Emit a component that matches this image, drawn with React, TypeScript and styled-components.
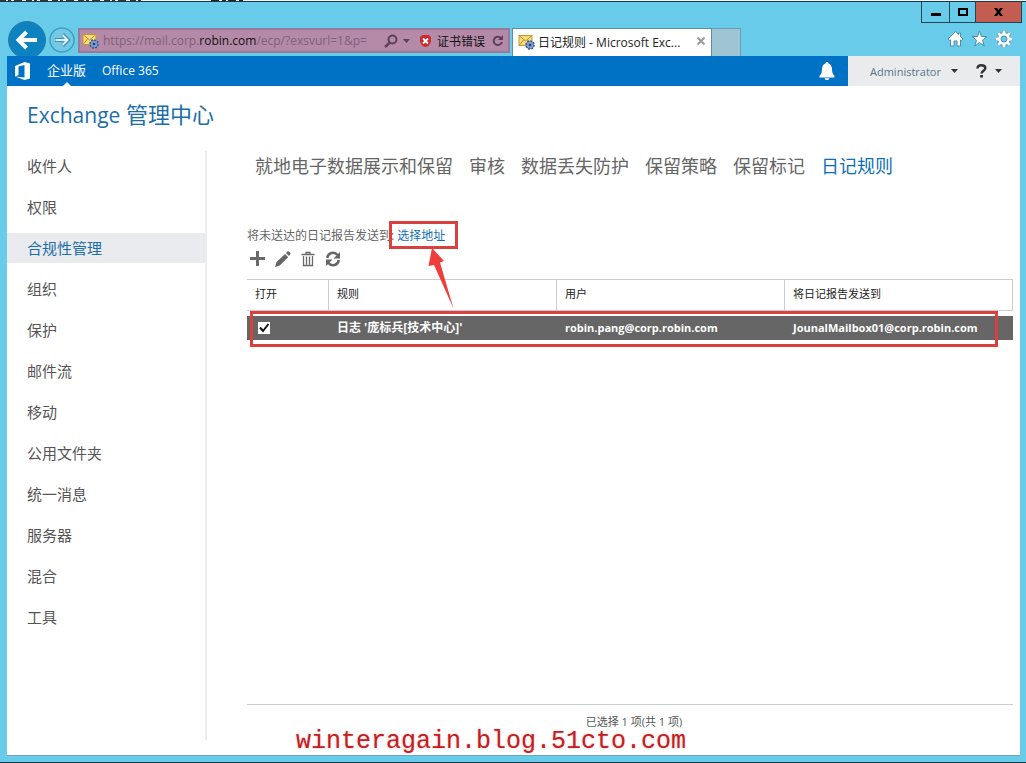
import React from "react";
import styled, { createGlobalStyle, css } from "styled-components";

const ui = `"Open Sans", "Noto Sans CJK SC", sans-serif`;

const GlobalStyle = createGlobalStyle`
  *, *::before, *::after { box-sizing: border-box; }
  body { margin: 0; background: #67cbe9; font-family: ${ui}; color: #333; }
  button, input { font: inherit; color: inherit; margin: 0; }
  button { border: 0; background: none; padding: 0; cursor: pointer; }
  a { color: inherit; text-decoration: none; }
  ul { list-style: none; margin: 0; padding: 0; }
`;

const Frame = styled.div`
  display: flex;
  flex-direction: column;
  min-height: 100vh;
  background: #67cbe9;
  border-bottom: 1px solid #17394a;
`;

const Edge = styled.svg`
  display: block;
  width: 100%;
  height: 2px;
  flex: none;
`;

const TitleBar = styled.header`
  display: flex;
  justify-content: flex-end;
  height: 21px;
  padding-right: 4px;
`;

const WindowButton = styled.button<{ $wide?: boolean; $close?: boolean }>`
  display: grid;
  place-items: center;
  width: ${(p) => (p.$close ? 46 : p.$wide ? 29 : 26)}px;
  height: 21px;
  border: solid #1d4556;
  border-width: 0 1px 1px ${(p) => (p.$wide ? 1 : 0)}px;
  background: ${(p) => (p.$close ? "#c35d52" : "transparent")};
`;

const NavBar = styled.div`
  display: flex;
  align-items: flex-start;
  height: 33px;
  padding: 0 13px 0 8px;
`;

const BackButton = styled.button`
  width: 38px;
  height: 35px;
  margin-top: -2px;
  overflow: hidden;
`;

const ForwardButton = styled.button`
  width: 26px;
  height: 26px;
  margin: 4px 3px 0;
`;

const AddressBar = styled.form`
  display: flex;
  align-items: center;
  width: 432px;
  height: 25px;
  margin: 5px 2px 0 0;
  padding: 0 4px 0 2px;
  border: 2px solid #967a97;
  background: #b58aa8;
  font-size: 12px;
  color: #111;
`;

const Url = styled.a`
  flex: 1;
  min-width: 0;
  margin-left: 4px;
  white-space: nowrap;
  color: #7f6279;
  b { font-weight: 400; color: #111; }
`;

const AddressButton = styled.button`
  display: flex;
  align-items: center;
  margin-left: 5px;
`;

const CertError = styled.button`
  display: flex;
  align-items: center;
  gap: 6px;
  margin: 0 2px 0 10px;
  font-size: 12px;
`;

const PageTab = styled.div`
  display: flex;
  align-items: center;
  width: 200px;
  height: 28px;
  margin-top: 5px;
  padding: 0 5px 2px;
  border: 1px solid #5a8fa3;
  border-bottom: 0;
  background: #fff;
  font-size: 12px;
  color: #222;
  span { flex: 1; margin-left: 3px; white-space: nowrap; }
`;

const NewTab = styled.button`
  width: 29px;
  height: 28px;
  margin-top: 5px;
  border: 1px solid #6b9caf;
  border-width: 1px 1px 0 0;
  background: #9fc4d3;
`;

const BrowserTools = styled.div`
  display: flex;
  gap: 7px;
  margin: 7px 0 0 auto;
`;

const Page = styled.div`
  display: flex;
  flex: 1;
  flex-direction: column;
  margin: 0 6px 6px 7px;
  border-bottom: 1px solid #6aa7bd;
  background: #fff;
`;

const SuiteBar = styled.nav`
  display: flex;
  height: 30px;
  background: #0072c6;
  color: #fff;
  font-size: 12px;
`;

const Logo = styled.a`
  display: grid;
  place-items: center;
  width: 32px;
`;

const SuiteLink = styled.a<{ $current?: boolean }>`
  position: relative;
  padding: 0 8px;
  line-height: 29px;
  font-size: ${(p) => (p.$current ? 13 : 12)}px;
  ${(p) =>
    p.$current &&
    css`
      &::after {
        content: "";
        position: absolute;
        left: 50%;
        bottom: 0;
        margin-left: -4px;
        border: 4px solid transparent;
        border-top: 0;
        border-bottom-color: #fff;
      }
    `}
`;

const BellButton = styled.button`
  display: grid;
  place-items: center;
  width: 42px;
  margin-left: auto;
`;

const Account = styled.div`
  display: flex;
  align-items: center;
  justify-content: space-between;
  width: 172px;
  padding: 0 18px 0 22px;
  background: #e9ebed;
  font-size: 11px;
`;

const MenuButton = styled.button<{ $gap: number }>`
  display: flex;
  align-items: center;
  gap: ${(p) => p.$gap}px;
  color: #55768a;
  svg { flex: none; }
`;

const Title = styled.h1`
  margin: 13px 20px 20px;
  font-size: 22px;
  line-height: 31px;
  font-weight: 400;
  color: #1c6ea8;
  span { font-size: 21px; }
`;

const Body = styled.div`
  display: flex;
  flex: 1;
`;

const Sidebar = styled.ul`
  display: flex;
  flex-direction: column;
  gap: 11px;
  width: 200px;
  margin-bottom: 15px;
  border-right: 2px solid #ececec;
`;

const SideLink = styled.a<{ $current?: boolean }>`
  display: block;
  height: 30px;
  padding-left: 20px;
  line-height: 30px;
  font-size: 15px;
  color: ${(p) => (p.$current ? "#1c6ea8" : "#555")};
  background: ${(p) => (p.$current ? "#e9ebee" : "transparent")};
`;

const Main = styled.main`
  display: flex;
  flex: 1;
  flex-direction: column;
  min-width: 0;
  padding: 0 7px 0 40px;
`;

const Tabs = styled.nav`
  display: flex;
  gap: 16px;
  height: 30px;
  padding-left: 8px;
  line-height: 30px;
  font-size: 18px;
`;

const Tab = styled.a<{ $current?: boolean }>`
  color: ${(p) => (p.$current ? "#0f6fb5" : "#666")};
  white-space: nowrap;
`;

const Undelivered = styled.p`
  display: flex;
  margin: 45px 0 0;
  line-height: 20px;
  font-size: 12px;
  color: #666;
`;

const Callout = styled.span`
  position: relative;
  z-index: 1;
  margin-left: 3px;
  a { color: #0f6fb5; }
  &::before {
    content: "";
    position: absolute;
    inset: -5px -13px -3px -8px;
    border: 3px solid #d9413f;
    pointer-events: none;
  }
`;

const Arrow = styled.svg`
  position: absolute;
  left: 30px;
  top: 22px;
  pointer-events: none;
`;

const Toolbar = styled.div`
  display: flex;
  gap: 9px;
  height: 33px;
  padding: 5px 0 0 3px;
`;

const ToolButton = styled.button`
  width: 16px;
  height: 16px;
  svg { display: block; }
`;

const Rules = styled.table`
  width: 100%;
  table-layout: fixed;
  border-collapse: separate;
  border-spacing: 0;
`;

const Col = styled.col<{ $width?: number }>`
  ${(p) => p.$width && `width: ${p.$width}px;`}
`;

const HeadCell = styled.th`
  height: 32px;
  padding: 0 8px 2px;
  border: 1px solid #ccc;
  border-left: 0;
  text-align: left;
  line-height: 16px;
  font-size: 11px;
  font-weight: 400;
  color: #222;
`;

const Gap = styled.tr`
  height: 5px;
  td { padding: 0; }
`;

const RuleRow = styled.tr`
  background: #666;
  color: #fff;
`;

const Cell = styled.td<{ $address?: boolean }>`
  height: 24px;
  padding: 0 8px;
  line-height: 20px;
  font-size: ${(p) => (p.$address ? 11 : 12)}px;
  font-weight: 700;
  white-space: nowrap;
`;

const CheckBox = styled.label`
  position: relative;
  display: block;
  width: 12px;
  margin-left: 3px;
  svg { position: absolute; left: 0; top: 0; pointer-events: none; }
`;

const Check = styled.input`
  appearance: none;
  display: block;
  width: 12px;
  height: 12px;
  background: #fff;
  & + svg { visibility: hidden; }
  &:checked + svg { visibility: visible; }
`;

const TableWrap = styled.div`
  position: relative;
`;

const RowMark = styled.div`
  position: absolute;
  inset: 32px 15px -7px 3px;
  border: 3px solid #d9413f;
  pointer-events: none;
`;

const Status = styled.footer`
  position: relative;
  height: 51px;
  margin-top: auto;
  padding: 9px 0 0 8px;
  border-top: 1px solid #c9cfd2;
  text-align: center;
  line-height: 16px;
  font-size: 11px;
  color: #555;
`;

const Watermark = styled.span`
  position: absolute;
  left: 49px;
  top: 25px;
  line-height: 24px;
  font-family: "Liberation Mono", monospace;
  font-size: 25px;
  color: #c3201f;
  text-shadow: 0 0 2px #f3b6b4;
  white-space: nowrap;
`;

const Caret = ({ color = "#333" }: { color?: string }) => (
  <svg width="7" height="4" viewBox="0 0 7 4"><path d="M0 0h7L3.500 4z" fill={color} /></svg>
);

const MailGear = () => (
  <svg width="17" height="16" viewBox="0 0 17 16">
    <rect x="1" y="1.500" width="13" height="10" fill="#f8dc7c" stroke="#c19a35" />
    <path d="M1.500 2l6 5 6-5M1.500 11l4-5M13.500 11l-4-5" fill="none" stroke="#b98f2e" />
    <circle cx="12" cy="11" r="4" fill="#5d7fb8" stroke="#34578f" strokeWidth="1.600" strokeDasharray="1.800 1.300" />
    <circle cx="12" cy="11" r="3.200" fill="#7f9dce" />
    <circle cx="12" cy="11" r="1.300" fill="#22406f" />
  </svg>
);

const gearTeeth = "M9 .8v16.400M.8 9h16.400M3.200 3.200l11.600 11.600M14.800 3.200L3.200 14.800";

const GearIcon = () => (
  <svg width="18" height="18" viewBox="0 0 18 18">
    <path d={gearTeeth} stroke="#4a8ea9" strokeWidth="4.200" />
    <circle cx="9" cy="9" r="6.600" fill="#4a8ea9" />
    <path d={gearTeeth} stroke="#fff" strokeWidth="2.800" />
    <circle cx="9" cy="9" r="5.900" fill="#fff" />
    <circle cx="9" cy="9" r="3" fill="#67cbe9" stroke="#4a8ea9" />
  </svg>
);

const sections = ["收件人", "权限", "合规性管理", "组织", "保护", "邮件流", "移动", "公用文件夹", "统一消息", "服务器", "混合", "工具"];
const tabs = ["就地电子数据展示和保留", "审核", "数据丢失防护", "保留策略", "保留标记", "日记规则"];

export default function App() {
  return (
    <Frame>
      <GlobalStyle />
      <Edge aria-hidden="true">
        <rect width="100%" height="1" fill="#eef4f6" />
        <path d="M0 .5h142" stroke="#333" strokeDasharray="6 2 3 3 8 4" />
        <path d="M211 .5h32" stroke="#222" strokeDasharray="8 3 4 2" />
        <rect y="1" width="100%" height="1" fill="#17394a" />
      </Edge>
      <TitleBar>
        <WindowButton $wide aria-label="最小化">
          <svg width="10" height="10"><path d="M0 6h10v3H0z" fill="#000" /></svg>
        </WindowButton>
        <WindowButton aria-label="最大化">
          <svg width="10" height="8"><path d="M1 1h8v6H1z" fill="none" stroke="#000" strokeWidth="2" /></svg>
        </WindowButton>
        <WindowButton $close aria-label="关闭">
          <svg width="9" height="8" viewBox="0 0 9 8"><path d="M0 0h3l1.500 2L6 0h3L6 4l3 4H6L4.500 6 3 8H0l3-4z" fill="#000" /></svg>
        </WindowButton>
      </TitleBar>
      <NavBar>
        <BackButton aria-label="后退">
          <svg width="38" height="38" viewBox="0 0 38 38">
            <circle cx="19" cy="19" r="18.500" fill="#0c83c0" stroke="#2c7ca3" />
            <path d="M29 19H11M18.500 11L10.500 19l8 8" fill="none" stroke="#fff" strokeWidth="4" />
          </svg>
        </BackButton>
        <ForwardButton aria-label="前进">
          <svg width="26" height="26" viewBox="0 0 26 26">
            <circle cx="13" cy="13" r="12" fill="#72c9e6" stroke="#3f9fc0" strokeWidth="1.500" />
            <path d="M6 13h12M13.500 7.500l5.500 5.500-5.500 5.500" fill="none" stroke="#438fae" strokeWidth="4" />
            <path d="M6.500 13h11M13.500 8l5 5-5 5" fill="none" stroke="#d8f2fa" strokeWidth="2" />
          </svg>
        </ForwardButton>
        <AddressBar onSubmit={(e) => e.preventDefault()}>
          <MailGear />
          <Url href="#">https://mail.corp.<b>robin.com</b>/ecp/?exsvurl=1&amp;p=</Url>
          <AddressButton type="button" aria-label="搜索">
            <svg width="14" height="14" viewBox="0 0 14 14"><circle cx="8.500" cy="5.500" r="4" fill="none" stroke="#5d4159" strokeWidth="2" /><path d="M6 8.500L1 13" stroke="#5d4159" strokeWidth="2.500" /></svg>
          </AddressButton>
          <AddressButton type="button" aria-label="地址列表"><Caret color="#5d4159" /></AddressButton>
          <CertError type="button">
            <svg width="11" height="12" viewBox="0 0 11 12"><path d="M2.500 0h6L11 2v5L8.500 11 5.500 12 2.500 11 0 7V2z" fill="#cd2a2c" /><path d="M3 3.500l5 5M8 3.500l-5 5" stroke="#fff" strokeWidth="1.800" /></svg>
            证书错误
          </CertError>
          <AddressButton type="button" aria-label="刷新">
            <svg width="12" height="12" viewBox="0 0 12 12"><path d="M9 3A4.200 4.200 0 1 0 10 7" fill="none" stroke="#5d4159" strokeWidth="2" /><path d="M11 0v5H6z" fill="#5d4159" /></svg>
          </AddressButton>
        </AddressBar>
        <PageTab>
          <MailGear />
          <span>日记规则 - Microsoft Exc...</span>
          <button aria-label="关闭选项卡">
            <svg width="10" height="10" viewBox="0 0 10 10"><path d="M1.500 1.500l7 7M8.500 1.500l-7 7" stroke="#999" strokeWidth="2" /></svg>
          </button>
        </PageTab>
        <NewTab aria-label="新建选项卡" />
        <BrowserTools>
          <button aria-label="主页">
            <svg width="17" height="18" viewBox="0 0 17 18"><path d="M8.500 1.500L1 9l1.500 1.500L3.500 10v6H7v-5h3v5h3.500v-6l1 .5L16 9l-2.500-2.500V3h-2v1.500z" fill="#fff" stroke="#4a8ea9" /></svg>
          </button>
          <button aria-label="收藏夹">
            <svg width="17" height="18" viewBox="0 0 17 18"><path d="M8.500 1l2 5.500H16l-4.500 3.700 1.700 5.800-4.700-3.500L3.800 16l1.700-5.800L1 6.500h5.500z" fill="#fff" stroke="#4a8ea9" /></svg>
          </button>
          <button aria-label="工具"><GearIcon /></button>
        </BrowserTools>
      </NavBar>
      <Page>
        <SuiteBar>
          <Logo href="#" aria-label="Office">
            <svg width="16" height="18" viewBox="0 0 16 18"><path d="M0 4L9.500 0 15 1.500v15L9.500 18 0 14.500 9.500 15.500V3L3.500 4.500v8.500L0 14.500z" fill="#fff" /></svg>
          </Logo>
          <SuiteLink href="#" $current>企业版</SuiteLink>
          <SuiteLink href="#">Office 365</SuiteLink>
          <BellButton aria-label="通知">
            <svg width="16" height="18" viewBox="0 0 16 18"><path d="M8 0c1 0 1.500.7 1.500 1.400C12 2.200 13 4.500 13 7c0 4 1 5.500 2.500 7v1.500H.5V14C2 12.500 3 11 3 7c0-2.500 1-4.800 3.500-5.600C6.500.7 7 0 8 0zM5.500 16.200h5C10 17.500 9 18 8 18s-2-.5-2.500-1.800z" fill="#fff" /></svg>
          </BellButton>
          <Account>
            <MenuButton $gap={10}>Administrator <Caret /></MenuButton>
            <MenuButton $gap={8} aria-label="帮助">
              <svg width="11" height="14" viewBox="0 0 11 14"><path d="M1.500 4.500C1.500 2.300 3 1.300 5.300 1.300S9.300 2.300 9.300 4.200c0 2.600-3.700 2.500-3.700 5.300" fill="none" stroke="#333" strokeWidth="2.500" /><path d="M4.200 11h2.800v2.600H4.200z" fill="#333" /></svg>
              <Caret />
            </MenuButton>
          </Account>
        </SuiteBar>
        <Title><span>Exchange</span> 管理中心</Title>
        <Body>
          <Sidebar>
            {sections.map((s) => (
              <li key={s}><SideLink href="#" $current={s === "合规性管理"}>{s}</SideLink></li>
            ))}
          </Sidebar>
          <Main>
            <Tabs>
              {tabs.map((t) => (
                <Tab key={t} href="#" $current={t === "日记规则"}>{t}</Tab>
              ))}
            </Tabs>
            <Undelivered>
              将未送达的日记报告发送到:
              <Callout>
                <a href="#">选择地址</a>
                <Arrow width="30" height="62" viewBox="0 0 30 62"><path d="M5 0l12 13-4 1.500 13.500 46L7 17l-5.500 1z" fill="#f03c3a" /></Arrow>
              </Callout>
            </Undelivered>
            <Toolbar>
              <ToolButton aria-label="新建">
                <svg width="16" height="16"><path d="M7.500 0v15M0 7.500h15" stroke="#6a6a6a" strokeWidth="3" /></svg>
              </ToolButton>
              <ToolButton aria-label="编辑">
                <svg width="16" height="16" viewBox="0 0 16 16"><path d="M0 16l1.500-5 8.500-8 3.200 3.200-8.500 8.300zM11 2l1.500-1.500c.8-.8 3.700 1.700 2.900 2.600L14 5z" fill="#666" /></svg>
              </ToolButton>
              <ToolButton aria-label="删除">
                <svg width="16" height="16" viewBox="0 0 16 16"><path d="M1.500 3.500h13M6 3V1.500h4V3M3.500 5v9.500h9V5M6.500 5.500v8M9.500 5.500v8" fill="none" stroke="#6a6a6a" strokeWidth="1.300" /></svg>
              </ToolButton>
              <ToolButton aria-label="刷新">
                <svg width="16" height="16" viewBox="0 0 16 16"><path d="M2.200 7A5.800 5.800 0 0 1 12.500 4M13.800 9A5.800 5.800 0 0 1 3.500 12" fill="none" stroke="#666" strokeWidth="2.500" /><path d="M15 1v6.500H8.500zM1 15V8.500h6.500z" fill="#666" /></svg>
              </ToolButton>
            </Toolbar>
            <TableWrap>
              <Rules>
                <colgroup><Col $width={82} /><Col /><Col /><Col /></colgroup>
                <thead>
                  <tr>
                    <HeadCell>打开</HeadCell>
                    <HeadCell>规则</HeadCell>
                    <HeadCell>用户</HeadCell>
                    <HeadCell>将日记报告发送到</HeadCell>
                  </tr>
                </thead>
                <tbody>
                  <Gap><td colSpan={4} /></Gap>
                  <RuleRow>
                    <Cell>
                      <CheckBox>
                        <Check type="checkbox" defaultChecked aria-label="打开规则" />
                        <svg width="12" height="12" viewBox="0 0 12 12"><path d="M2 5.500l3 3.500 5.500-7" fill="none" stroke="#111" strokeWidth="2" /></svg>
                      </CheckBox>
                    </Cell>
                    <Cell>日志 '庞标兵[技术中心]'</Cell>
                    <Cell $address>robin.pang@corp.robin.com</Cell>
                    <Cell $address>JounalMailbox01@corp.robin.com</Cell>
                  </RuleRow>
                </tbody>
              </Rules>
              <RowMark />
            </TableWrap>
            <Status>
              已选择 1 项(共 1 项)
              <Watermark>winteragain.blog.51cto.com</Watermark>
            </Status>
          </Main>
        </Body>
      </Page>
    </Frame>
  );
}
